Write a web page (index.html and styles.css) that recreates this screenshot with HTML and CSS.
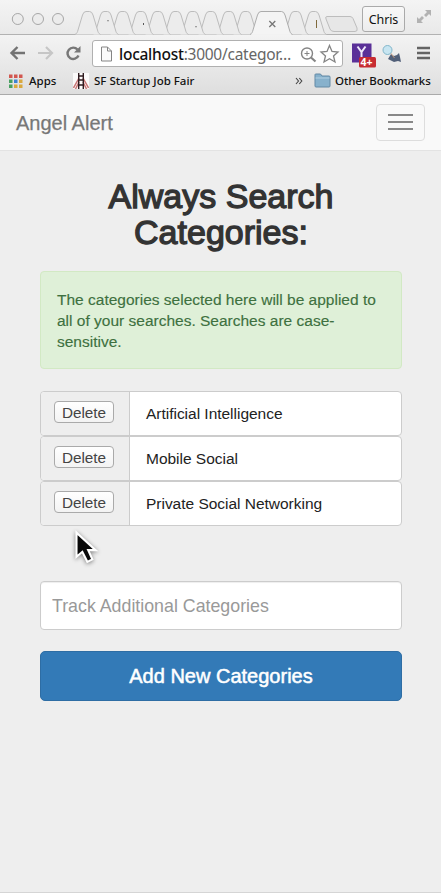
FILE: index.html
```html
<!DOCTYPE html>
<html lang="en">
<head>
<meta charset="utf-8">
<title>Angel Alert</title>
<link rel="stylesheet" href="styles.css">
</head>
<body>
<div class="window">
  <header class="chrome">
    <div class="tabstrip">
      <svg class="tabs" width="441" height="35" viewBox="0 0 441 35">
        <defs>
          <path id="tab" d="M0 34.500C2 33.500 2.500 32 3 30L7.500 15Q8.500 11.500 11 11.500H14.500Q17 11.500 18 15L22.500 30C23 32 23.500 33.500 25.500 34.500" fill="#ececec" stroke="#bcbcbc"/>
        </defs>
        <path d="M0 34.500H441" stroke="#b2b2b2"/>
        <g fill="#ececec" stroke="#a7a7a7">
          <circle cx="17.800" cy="19" r="5.500"/><circle cx="38" cy="19" r="5.500"/><circle cx="58" cy="19" r="5.500"/>
        </g>
        <use href="#tab" x="301"/><use href="#tab" x="283"/>
        <use href="#tab" x="233"/><use href="#tab" x="216"/><use href="#tab" x="198"/><use href="#tab" x="180"/><use href="#tab" x="163"/><use href="#tab" x="145"/><use href="#tab" x="128"/><use href="#tab" x="110"/><use href="#tab" x="93"/><use href="#tab" x="75"/>
        <path d="M250 34.500C252 33.500 252.500 32 253 30L257.500 15Q258.500 11.500 261 11.500H281.500Q284 11.500 285 15L289.500 30C290 32 290.500 33.500 292.500 34.500" fill="#f4f4f4" stroke="#acacac"/>
        <path d="M251.500 34.500H291" stroke="#f2f2f2" stroke-width="1.500"/>
        <path d="M269.300 21l6 6M275.300 21l-6 6" stroke="#777" stroke-width="1.300"/>
        <path d="M108 20v1.300M143.500 23v2M196 26v1.300" stroke="#555"/>
        <path d="M316.500 20v8" stroke="#806a3c"/>
        <path d="M327 16.500H350Q352 16.500 353 18.500L357 28Q358 31.500 355 31.500H334Q331 31.500 330 29L326 19Q325 16.500 327 16.500Z" fill="#e7e7e7" stroke="#bdbdbd"/>
        <g fill="#b2b2b2"><path d="M425 10h6v6l-2-2-3 3-2-2 3-3zM417 17l2 2 3-3 2 2-3 3 2 2h-6z"/></g>
      </svg>
      <span class="profile">Chris</span>
    </div>
    <div class="toolbar">
      <svg width="92" height="31" viewBox="0 0 92 31" fill="none">
        <path d="M25 18H12M17.500 12L11.500 18L17.500 24" stroke="#737373" stroke-width="2.400"/>
        <path d="M38 18H51M46 12L52 18L46 24" stroke="#c6c6c6" stroke-width="2.200"/>
        <path d="M77.500 14.500A5.700 5.700 0 1 0 78.500 20.500" stroke="#777" stroke-width="2.400"/><path d="M80.500 11v6.500H74z" fill="#777"/>
      </svg>
      <div class="omnibox">
        <svg width="13" height="16" viewBox="0 0 13 16"><path d="M1.500 1H7.500L11.500 5V15H1.500ZM7.500 1V5H11.500" fill="#fafafa" stroke="#858585"/></svg>
        <span class="url"><b>localhost</b>:3000/categor…</span>
        <svg width="42" height="22" viewBox="0 0 42 22" fill="none" stroke="#858585">
          <circle cx="8" cy="10.500" r="5.500" stroke-width="1.400"/><path d="M5.500 10.500h5M8 8v5"/><path d="M12 14.500l4.500 4" stroke-width="2.200"/>
          <path d="M30.500 2.500L33 8.500L39 9L34.500 13L36 19L30.500 15.800L25 19L26.500 13L22 9L28 8.500Z" stroke-width="1.300"/>
        </svg>
      </div>
      <svg width="98" height="31" viewBox="343 0 98 31">
        <path d="M352 8.500H371.500V27.500H352Z" fill="#5a3098"/>
        <path d="M357.500 11.500L361.500 17L365.500 11.500M361.500 17V23" fill="none" stroke="#eee8fa" stroke-width="2"/>
        <rect x="359" y="22" width="17" height="10.500" rx="1.500" fill="#c72c32"/>
        <text x="360.500" y="31" class="badge">4+</text>
        <path d="M391 19l3 2 3-1 2-2 1 4 1 5-3-1-4 1-4-2-2-1z" fill="#515f78"/>
        <path d="M390.500 18l4 5" stroke="#bd977d"/>
        <circle cx="387.500" cy="15" r="4.500" fill="#c7e5f1" stroke="#82b6ca"/>
        <path d="M417 13h13M417 18h13M417 23h13" stroke="#646464" stroke-width="2.400"/>
      </svg>
    </div>
    <div class="bookmarks">
      <svg class="apps" width="14" height="14" viewBox="0 0 14 14"><path d="M0 .5h3.500V4H0zM5 .5h3.500V4H5zM10 .5h3.500V4H10z" fill="#d25750"/><path d="M0 5.500h3.500V9H0zM0 10.500h3.500V14H0z" fill="#48a060"/><path d="M5 5.500h3.500V9H5z" fill="#3e83d2"/><path d="M10 5.500h3.500V9H10zM10 10.500h3.500V14H10zM5 10.500h3.500V14H5z" fill="#d9a83d"/></svg>
      <span class="bm-apps">Apps</span>
      <svg class="bridge" width="16" height="16" viewBox="0 0 16 16"><path fill="#fbfafa" d="M0 0h16v16H0z"/><path d="M.5 15L6 5M2.500 16L6 9M15.500 15L10 5M13.500 16L10 9" stroke="#c97676" stroke-width="1.500"/><path d="M5.700 0v16M10.300 0v16M5 3h6M5 7h6M5 12h6" stroke="#301c20" stroke-width="1.400"/></svg>
      <span class="bm-sf">SF Startup Job Fair</span>
      <svg class="more" width="8" height="8" viewBox="0 0 8 8" fill="none" stroke="#444" stroke-width="1.100"><path d="M1 1l2.500 3L1 7M4.300 1l2.500 3-2.500 3"/></svg>
      <svg class="folder" width="17" height="15" viewBox="0 0 17 15"><path d="M1 3V1.500Q1 1 2 1H6.500L8 3H15Q16 3 16 4V13Q16 14 15 14H2Q1 14 1 13Z" fill="#87b1cc" stroke="#6289a5"/><path d="M1.500 5H15.500" stroke="#b3d0e2"/></svg>
      <span class="bm-other">Other Bookmarks</span>
    </div>
  </header>
  <nav class="navbar">
    <a class="brand">Angel Alert</a>
    <button class="toggle" aria-label="Menu"><i></i><i></i><i></i></button>
  </nav>
  <main class="content">
    <h1>Always Search<br>Categories:</h1>
    <p class="notice">The categories selected here will be applied to<br>all of your searches. Searches are case-<br>sensitive.</p>
    <ul class="list">
      <li><span class="addon"><button class="delete">Delete</button></span><span class="name">Artificial Intelligence</span></li>
      <li><span class="addon"><button class="delete">Delete</button></span><span class="name">Mobile Social</span></li>
      <li><span class="addon"><button class="delete">Delete</button></span><span class="name">Private Social Networking</span></li>
    </ul>
    <input class="field" placeholder="Track Additional Categories">
    <button class="submit">Add New Categories</button>
  </main>
  <svg class="pointer" width="25" height="37" viewBox="0 0 30 44"><path d="M3 3V32L10 26L16 38L22 35L17 24H26Z" fill="#080808" stroke="#fff" stroke-width="2.500"/></svg>
</div>
</body>
</html>
```
FILE: styles.css
```css
* { box-sizing: border-box; }
body { margin: 0; background: #eee; font-family: "Liberation Sans", Arial, sans-serif; }
svg { display: block; flex: none; }
button { font-family: inherit; }
.window { position: relative; height: 893px; overflow: hidden; border-bottom: 1px solid #d5d5d5; background: #eee; }
.chrome { height: 95px; background: linear-gradient(#f4f4f4 0, #e9e9e9 34px, #f3f3f3 35px, #dedede 94px); border-bottom: 1px solid #aaa; font-family: "Noto Sans", sans-serif; color: #111; }
.tabstrip { position: relative; height: 35px; }
.profile { position: absolute; left: 362px; top: 6px; width: 43px; height: 26px; border: 1px solid #aaa; border-radius: 3px; background: linear-gradient(#f8f8f8, #ececec); font-size: 12.5px; line-height: 25px; text-align: center; letter-spacing: -.1px; }
.toolbar { display: flex; height: 32px; }
.omnibox { display: flex; align-items: center; width: 251px; height: 27px; margin-top: 5px; padding-left: 7px; border: 1px solid #b0b0b0; border-radius: 3px; background: #fff; }
.url { width: 180px; margin-left: 6px; font-size: 15.5px; line-height: 24px; letter-spacing: -.26px; white-space: nowrap; color: #666; }
.url b { font-weight: 500; color: #111; }
.toolbar > svg:last-child { overflow: visible; }
.badge { font: bold 10.5px "Noto Sans", sans-serif; fill: #fff; }
.bookmarks { display: flex; align-items: center; height: 27px; padding-left: 9px; font-size: 11.5px; font-weight: 500; white-space: nowrap; }
.bm-apps { width: 44px; margin-left: 6px; }
.bm-sf { width: 201px; margin-left: 5px; }
.more { margin-right: 11px; }
.bm-other { margin-left: 4px; letter-spacing: -.12px; }
.navbar { display: flex; justify-content: space-between; height: 56px; padding: 9px 16px 0; background: #f9f9f9; border-bottom: 1px solid #e3e3e3; }
.brand { color: #777; font-size: 20px; line-height: 38px; -webkit-text-stroke: .25px #777; }
.toggle { display: flex; flex-direction: column; justify-content: center; align-items: center; gap: 5px; width: 49px; height: 37px; padding: 0 0 2px; border: 1px solid #ddd; border-radius: 4px; background: none; }
.toggle i { width: 25px; height: 2px; background: #888; }
.content { padding: 0 39px 0 40px; }
h1 { margin: 27px 0 0; color: #333; font-size: 34px; font-weight: 400; line-height: 36px; text-align: center; -webkit-text-stroke: 1.3px #333; }
.notice { height: 98px; margin: 21px 0 0; padding: 17px 16px; border: 1px solid #d2e9c4; border-radius: 4px; background: #dff0d8; color: #3e7040; font-size: 15.5px; line-height: 21px; white-space: nowrap; -webkit-text-stroke: .15px #3e7040; }
.list { margin: 22px 0 0; padding: 0; list-style: none; }
.list li { display: flex; height: 45px; border: 1px solid #ccc; border-radius: 4px; background: #fff; }
.addon { width: 89px; padding: 9px 0 0 13px; border-right: 1px solid #ccc; border-radius: 4px 0 0 4px; background: #eee; }
.delete { display: block; width: 60px; height: 22px; padding: 2px 0 0; border: 1px solid #aaa; border-radius: 4px; background: linear-gradient(#fff, #f3f3f3); color: #444; font-size: 15.3px; line-height: 18px; }
.name { padding-left: 16px; color: #222; font-size: 15.5px; line-height: 44px; letter-spacing: -.02px; }
.field { display: block; width: 100%; height: 49px; margin-top: 55px; padding: 2px 11px 0; border: 1px solid #ccc; border-radius: 4px; background: #fff; font: 17.8px "Liberation Sans", sans-serif; box-shadow: inset 0 1px 1px #00000012; }
.field::placeholder { color: #999; opacity: 1; }
.submit { display: block; width: 100%; height: 50px; margin-top: 21px; padding: 0; border: 1px solid #2e6da4; border-radius: 5px; background: #337ab7; color: #fff; font-size: 20px; -webkit-text-stroke: .5px #fff; }
.pointer { position: absolute; left: 74px; top: 530px; filter: drop-shadow(0 1px 2px #0007); }
```
